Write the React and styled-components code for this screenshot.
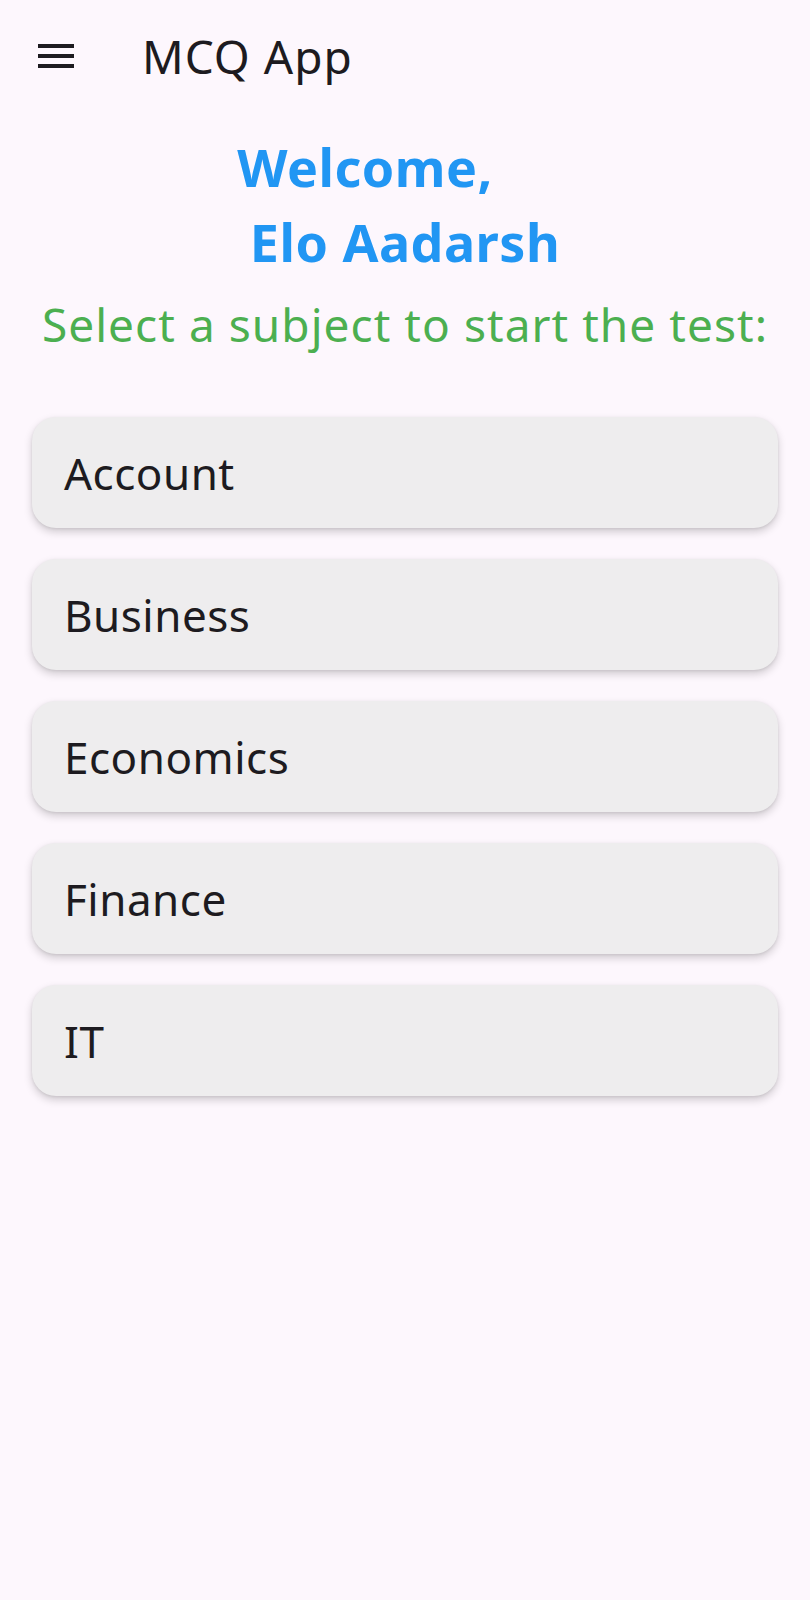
import styled, { createGlobalStyle } from 'styled-components'

const GlobalStyle = createGlobalStyle`
    html, body {
        margin: 0;
        padding: 0;
        background-color: #fdf7fd;
    }
    body {
        font-family: "Noto Sans", "Open Sans", sans-serif;
        color: #1d1b20;
    }
`

const Page = styled.div`
    min-height: 1600px;
    background-color: #fdf7fd;
`

const AppBar = styled.header`
    display: flex;
    align-items: center;
    height: 112px;
    padding-left: 32px;
`

const MenuButton = styled.button`
    width: 48px;
    height: 48px;
    padding: 0;
    border: none;
    background: transparent;
    display: flex;
    align-items: center;
    justify-content: center;
    margin-right: 62px;
    cursor: pointer;
`

const AppTitle = styled.h1`
    margin: 0;
    font-size: 46px;
    line-height: 112px;
    font-weight: 400;
    letter-spacing: 1px;
    color: #1d1b20;
`

const Welcome = styled.h2`
    margin: 17px 0 0;
    font-size: 52px;
    line-height: 75px;
    font-weight: 700;
    letter-spacing: 0.5px;
    color: #2196f3;
    text-align: center;
`

const WelcomeLine = styled.span`
    display: block;
    padding-right: ${(props) => props.$shift || 0}px;
`

const Subtitle = styled.p`
    margin: 14px 0 0;
    font-size: 46px;
    line-height: 63px;
    letter-spacing: 1.05px;
    color: #4caf50;
    text-align: center;
`

const SubjectList = styled.div`
    display: flex;
    flex-direction: column;
    gap: 31px;
    margin: 61px 32px 0;
`

const SubjectCard = styled.div`
    height: 111px;
    display: flex;
    align-items: center;
    padding: 0 32px;
    background-color: #eeedee;
    border-radius: 24px;
    box-shadow: 0 4px 8px rgba(0, 0, 0, 0.18), 0 1px 3px rgba(0, 0, 0, 0.08);
    font-size: 44px;
    letter-spacing: 0.5px;
    color: #1d1b20;
    cursor: pointer;
`

const MenuIcon = () => (
    <svg width="48" height="48" viewBox="0 0 24 24">
        <path d="M3 18h18v-2H3v2zm0-5h18v-2H3v2zm0-7v2h18V6H3z" fill="#1d1b20" />
    </svg>
)

const subjects = ['Account', 'Business', 'Economics', 'Finance', 'IT']

const App = () => {
    return (
        <Page>
            <GlobalStyle />
            <AppBar>
                <MenuButton aria-label="menu">
                    <MenuIcon />
                </MenuButton>
                <AppTitle>MCQ App</AppTitle>
            </AppBar>
            <Welcome>
                <WelcomeLine $shift={80}>Welcome,</WelcomeLine>
                <WelcomeLine>Elo Aadarsh</WelcomeLine>
            </Welcome>
            <Subtitle>Select a subject to start the test:</Subtitle>
            <SubjectList>
                {subjects.map((subject) => {
                    return (
                        <SubjectCard key={subject}>{subject}</SubjectCard>
                    )
                })}
            </SubjectList>
        </Page>
    )
}

export default App
